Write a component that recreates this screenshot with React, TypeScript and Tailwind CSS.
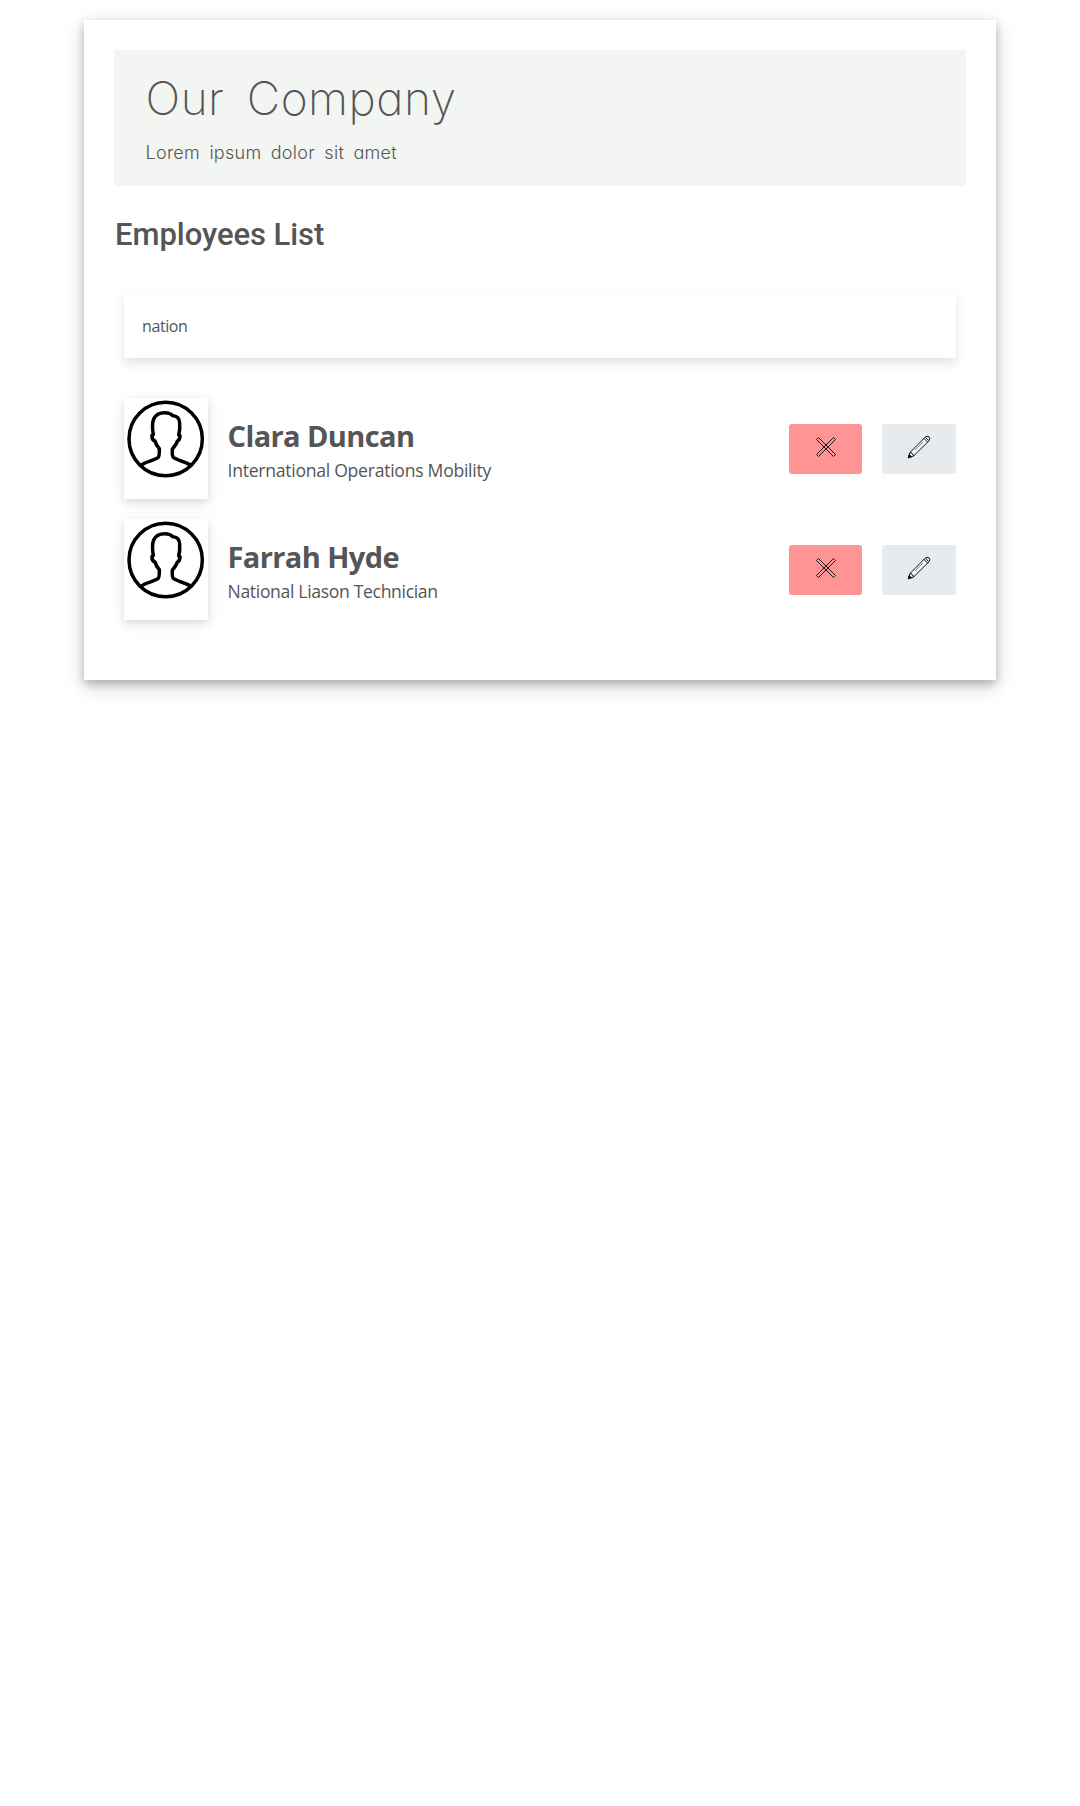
import React from "react";

const employees = [
  { name: "Clara Duncan", role: "International Operations Mobility", nameSpacing: "tracking-[-0.6px]", roleSpacing: "tracking-[-0.27px]" },
  { name: "Farrah Hyde", role: "National Liason Technician", nameSpacing: "tracking-[-0.6px]", roleSpacing: "tracking-[-0.34px]" },
];

function Avatar() {
  return (
    <div className="h-[101px] w-[84px] shrink-0 bg-white shadow-[0_3px_8px_rgba(0,0,0,0.12),0_4px_20px_rgba(0,0,0,0.05)]">
      <svg viewBox="42 39 252 303" className="block h-full w-full" fill="none" stroke="#000" strokeWidth="10.5" strokeLinejoin="round">
        <circle cx="167" cy="162" r="110" />
        <path d="M94 240C108 230 132 226 144 218C149 214 148 203 148 191C142 184 137 177 135 168C126 165 125 160 126 151L130 149C127 132 126 115 131 102C137 88 150 83 165 83C175 83 183 86 188 92C201 92 209 101 209 115C210 128 209 139 206 150L210 152C210 160 209 165 202 168C200 177 193 185 187 192C187 203 185 213 191 218C202 226 226 230 241 240" />
      </svg>
    </div>
  );
}

function CrossIcon() {
  return (
    <svg width="20" height="20" viewBox="0 0 20 20" fill="none" stroke="#111" strokeWidth="0.95">
      <path d="M2.5 0.5L10 8L17.5 0.5L19.5 2.5L12 10L19.5 17.5L17.5 19.5L10 12L2.5 19.5L0.5 17.5L8 10L0.5 2.5Z" />
      <path d="M8 10L10 8L12 10L10 12Z" />
    </svg>
  );
}

function PencilIcon() {
  return (
    <svg width="24" height="24" viewBox="0 0 24 24" fill="none" stroke="#111" strokeWidth="1">
      <path fill="#f3f5f6" d="M1.3 22.7L3 17.5L18.2 2.2Q20 0.5 22 1.8Q23.5 3.8 22.1 5.6L6.5 21Z" />
      <path d="M3 17.5L4.5 17.8L5 19L6.2 19.5L6.5 21M16.8 3.2L20.7 7.2M18.5 2.3L21.7 5.5" />
      <path d="M8 15L16 7" strokeWidth="0.5" />
      <path d="M1.3 22.7L2.2 19.5L4.5 21.8Z" fill="#111" />
    </svg>
  );
}

export default function App() {
  return (
    <div className="min-h-[1806px] bg-white pt-5 text-[#555]">
      <main className="ml-[84px] h-[660px] w-[912px] bg-white p-[30px] shadow-[0_4px_8px_rgba(0,0,0,0.2),0_6px_20px_rgba(0,0,0,0.19)]">
        <header className="h-[136px] bg-[#f3f5f2] px-[31.5px] pt-[18px] font-['Inter'] [font-feature-settings:'cv11']">
          <h1 className="h-[60px] whitespace-nowrap text-[46px] leading-[60px] font-extralight tracking-[0.5px] [word-spacing:9px]">Our Company</h1>
          <p className="mt-[10px] whitespace-nowrap text-[18px] leading-[30px] font-light tracking-[0.28px] [word-spacing:4px]">Lorem ipsum dolor sit amet</p>
        </header>
        <h2 className="mt-7 ml-px h-10 font-['Roboto'] text-[31px] leading-[42px] font-medium tracking-[-0.05px]">Employees List</h2>
        <input
          aria-label="Search employees"
          defaultValue="nation"
          className="mx-[10px] mt-[39px] block h-[65px] w-[832px] bg-white px-[18px] font-['Open_Sans'] text-[16px] tracking-[-0.4px] outline-none shadow-[0_5px_10px_rgba(0,0,0,0.12)]"
        />
        <ul className="mx-[10px] mt-10 flex flex-col gap-5">
          {employees.map((e) => (
            <li key={e.name} className="flex h-[101px]">
              <Avatar />
              <div className="ml-[19.5px] flex-1 pt-[18px] font-['Open_Sans'] whitespace-nowrap">
                <h3 className={`text-[29px] leading-10 font-bold ${e.nameSpacing}`}>{e.name}</h3>
                <p className={`text-[17.6px] leading-[28px] ${e.roleSpacing}`}>{e.role}</p>
              </div>
              <button aria-label="Delete" className="mt-[26px] flex h-[50px] w-[73px] justify-center rounded-[3px] bg-[#ff9494] pt-[13px]">
                <CrossIcon />
              </button>
              <button aria-label="Edit" className="mt-[26px] ml-5 flex h-[50px] w-[74px] justify-center rounded-[3px] bg-[#e7ebee] pt-[11px]">
                <PencilIcon />
              </button>
            </li>
          ))}
        </ul>
      </main>
    </div>
  );
}
